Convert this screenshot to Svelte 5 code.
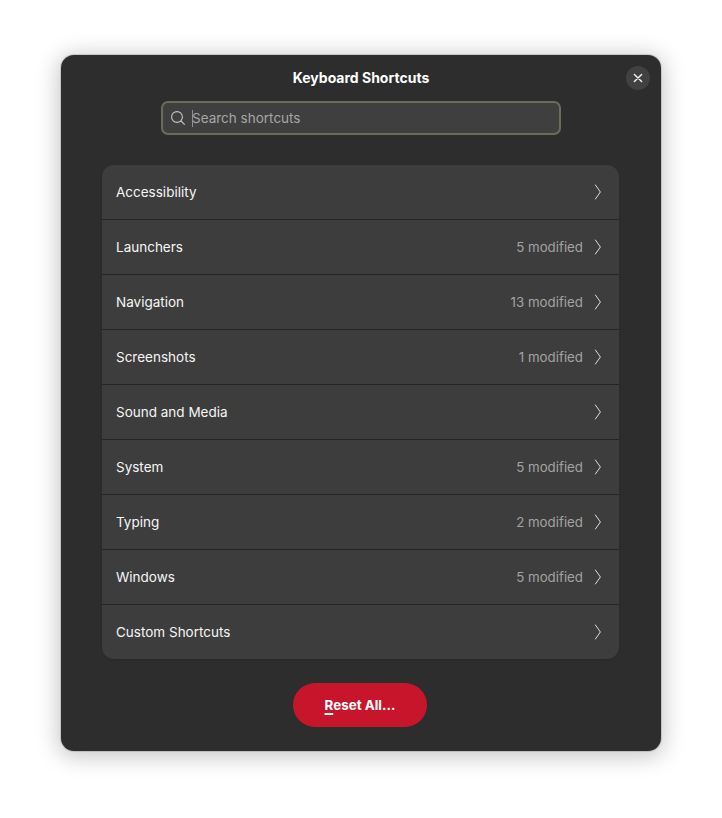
<script>
  const groups = [
    { name: "Accessibility", modified: 0 },
    { name: "Launchers", modified: 5 },
    { name: "Navigation", modified: 13 },
    { name: "Screenshots", modified: 1 },
    { name: "Sound and Media", modified: 0 },
    { name: "System", modified: 5 },
    { name: "Typing", modified: 2 },
    { name: "Windows", modified: 5 },
    { name: "Custom Shortcuts", modified: 0 }
  ];
</script>

<div class="page">
  <div class="dialog">
    <header class="header">
      <h1>Keyboard Shortcuts</h1>
      <button class="close" aria-label="Close">
        <svg width="10" height="10" viewBox="0 0 10 10">
          <path d="M1.4 1.4l7.2 7.2M8.6 1.4l-7.2 7.2" stroke="#f4f4f4" stroke-width="1.4" fill="none" stroke-linecap="round" />
        </svg>
      </button>
    </header>

    <div class="search">
      <svg width="16" height="16" viewBox="0 0 16 16">
        <circle cx="7" cy="7" r="5.4" stroke="#c6c6c6" stroke-width="1.1" fill="none" />
        <path d="M11 11l3.4 3.4" stroke="#c6c6c6" stroke-width="1.1" fill="none" stroke-linecap="round" />
      </svg>
      <span class="caret"></span>
      <span class="placeholder">Search shortcuts</span>
    </div>

    <div class="list">
      {#each groups as group}
        <div class="row">
          <span class="name">{group.name}</span>
          {#if group.modified}
            <span class="count">{group.modified} modified</span>
          {/if}
          <svg class="chevron" width="8" height="16" viewBox="0 0 8 16">
            <path d="M1.4 1l5 7-5 7" stroke="#dedede" stroke-width="1" fill="none" stroke-linecap="round" stroke-linejoin="round" />
          </svg>
        </div>
      {/each}
    </div>

    <div class="footer">
      <button class="reset"><span class="label"><u>R</u>eset All…</span></button>
    </div>
  </div>
</div>

<style>
  :global(body) {
    background: #fff;
    font-family: Inter, "Noto Sans", sans-serif;
  }

  .page {
    padding: 55px 61px 67px;
  }

  .dialog {
    width: 600px;
    height: 696px;
    box-sizing: border-box;
    display: flex;
    flex-direction: column;
    background: #2d2d2d;
    border-radius: 13px;
    box-shadow: 0 0 0 1px rgba(0, 0, 0, 0.12), 0 3px 22px 3px rgba(0, 0, 0, 0.22);
  }

  .header {
    display: flex;
    justify-content: center;
    align-items: center;
    position: relative;
    height: 46px;
  }

  h1 {
    margin: 0 0 2px;
    font-size: 14px;
    font-weight: 700;
    color: #fff;
  }

  .close {
    position: absolute;
    top: 11px;
    right: 11px;
    width: 24px;
    height: 24px;
    padding: 0;
    border: none;
    border-radius: 50%;
    background: #414141;
    display: flex;
    align-items: center;
    justify-content: center;
  }

  .search {
    width: 400px;
    height: 34px;
    box-sizing: border-box;
    margin: 0 auto;
    display: flex;
    align-items: center;
    padding-left: 7px;
    background: #3f3f3f;
    border: 2px solid #6c6c5a;
    border-radius: 7px;
  }

  .caret {
    width: 1px;
    height: 17px;
    margin: 0 -1px 0 6px;
    background: #8f8f8f;
  }

  .placeholder {
    font-size: 13.5px;
    color: #a6a6a6;
  }

  .list {
    margin: 30px 42px 0 41px;
    background: #3d3d3d;
    border-radius: 12px;
    box-shadow: 0 1px 2px rgba(0, 0, 0, 0.1);
    overflow: hidden;
  }

  .row {
    height: 54px;
    display: flex;
    align-items: center;
    padding: 0 17px 0 14px;
    font-size: 13.5px;
    border-bottom: 1px solid #252525;
  }

  .row:last-child {
    border-bottom: none;
  }

  .name {
    flex: 1;
    color: #f6f6f6;
  }

  .count {
    margin-right: 11px;
    font-size: 13.3px;
    color: #a3a3a3;
  }

  .chevron {
    flex-shrink: 0;
  }

  .footer {
    display: flex;
    justify-content: center;
    margin-top: 24px;
    padding-right: 2px;
  }

  .reset {
    width: 134px;
    height: 44px;
    padding: 0;
    border: none;
    border-radius: 22px;
    background: #c7162b;
    color: #fff;
    font-family: inherit;
    font-size: 13.4px;
    font-weight: 700;
  }

  .reset u {
    text-underline-offset: 3px;
    text-decoration-thickness: 2px;
  }
</style>
